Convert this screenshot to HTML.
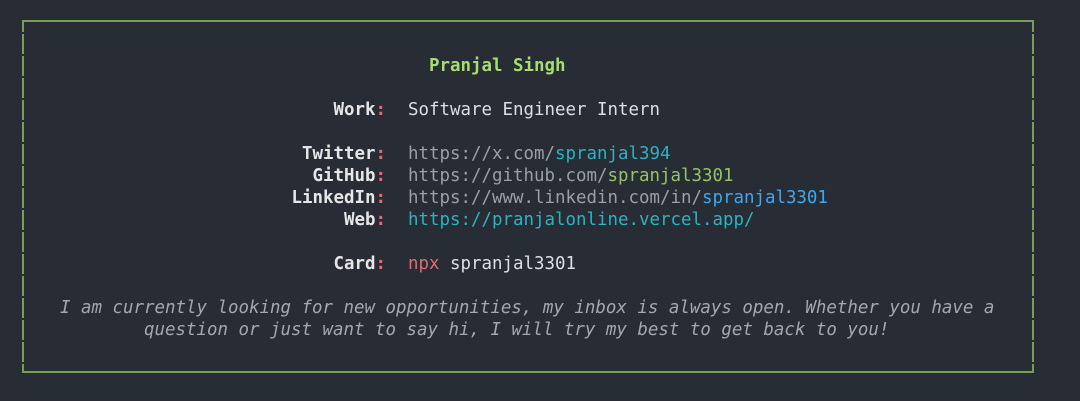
<!DOCTYPE html>
<html><head><meta charset="utf-8"><style>
html,body{margin:0;padding:0;background:#282c34;width:1080px;height:401px;overflow:hidden}
body{position:relative;font-family:"DejaVu Sans Mono","Liberation Mono",monospace;font-size:17.45px;}
.h{position:absolute;left:22px;width:1012px;height:2px;background:#76a05a}
.v{position:absolute;top:21px;width:2px;height:352px;background:repeating-linear-gradient(#76a05a 0 11px,#282c34 11px 13px,#76a05a 13px 22px)}
.r{position:absolute;left:0;width:1080px;height:22px;line-height:22px;white-space:pre}
.l{position:absolute;right:694px;font-weight:bold;color:#e6e6e6}
.c{color:#e06c75}
.val{position:absolute;left:408px;color:#9a9fa8}
.cy{color:#2cb3c1}.gr{color:#94c369}.bl{color:#3fa7f0}.pk{color:#e06c75}.wh{color:#dcdfe4}
.it{position:absolute;font-style:italic;color:#a3a7ae;white-space:pre;line-height:22px}
</style></head><body>
<div class="h" style="top:20px"></div>
<div class="h" style="top:371px"></div>
<div class="v" style="left:22px"></div>
<div class="v" style="left:1032px"></div>
<div class="r" style="top:55px"><span style="position:absolute;left:429px;font-weight:bold;color:#a6dd72">Pranjal Singh</span></div>
<div class="r" style="top:99px"><span class="l">Work<span class="c">:</span></span><span class="val wh">Software Engineer Intern</span></div>
<div class="r" style="top:143px"><span class="l">Twitter<span class="c">:</span></span><span class="val">https://x.com/<span class="cy">spranjal394</span></span></div>
<div class="r" style="top:165px"><span class="l">GitHub<span class="c">:</span></span><span class="val">https://github.com/<span class="gr">spranjal3301</span></span></div>
<div class="r" style="top:187px"><span class="l">LinkedIn<span class="c">:</span></span><span class="val">https://www.linkedin.com/in/<span class="bl">spranjal3301</span></span></div>
<div class="r" style="top:209px"><span class="l">Web<span class="c">:</span></span><span class="val cy">https://pranjalonline.vercel.app/</span></div>
<div class="r" style="top:253px"><span class="l">Card<span class="c">:</span></span><span class="val"><span class="pk">npx</span> <span class="wh">spranjal3301</span></span></div>
<div class="it" style="top:297px;left:60px">I am currently looking for new opportunities, my inbox is always open. Whether you have a</div>
<div class="it" style="top:319px;left:144px">question or just want to say hi, I will try my best to get back to you!</div>
</body></html>
